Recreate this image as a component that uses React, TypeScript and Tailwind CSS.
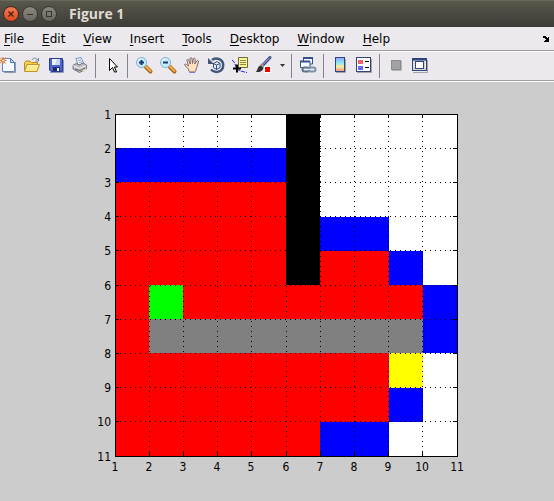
import React from 'react';

const menus = ['File', 'Edit', 'View', 'Insert', 'Tools', 'Desktop', 'Window', 'Help'];

// one string per row, one letter per cell
const map = [
  'wwwwwkwwww',
  'bbbbbkwwww',
  'rrrrrkwwww',
  'rrrrrkbbww',
  'rrrrrkrrbw',
  'rgrrrrrrrb',
  'raaaaaaaab',
  'rrrrrrrryw',
  'rrrrrrrrbw',
  'rrrrrrbbww',
];

const colors: Record<string, string> = {
  w: '#ffffff',
  k: '#000000',
  b: '#0000ff',
  r: '#ff0000',
  g: '#00ff00',
  a: '#808080',
  y: '#ffff00',
};

const SIZE = 342;
const LEFT = 24;
const TOP = 8;
const edge = (i: number) => Math.round((i * SIZE) / 10);
const line = (i: number) => Math.floor((i * SIZE) / 10);
const ticks = [0, 1, 2, 3, 4, 5, 6, 7, 8, 9, 10];

const Plot = () => (
  <svg width="392" height="372" viewBox="0 0 392 372" role="img" aria-label="Grid map" shapeRendering="crispEdges">
    <g transform={`translate(${LEFT} ${TOP})`}>
      {map.map((row, y) =>
        row.split('').map((c, x) => (
          <rect key={`${x}-${y}`} x={edge(x)} y={edge(y)} width={edge(x + 1) - edge(x)} height={edge(y + 1) - edge(y)} fill={colors[c]} />
        ))
      )}
      {ticks.slice(1, 10).map((i) => (
        <g key={i} stroke="#000" strokeWidth="1">
          <path d={`M${line(i) + 0.5} 2V${SIZE}`} strokeDasharray="1 4" />
          <path d={`M0 ${line(i) + 0.5}H${SIZE}`} strokeDasharray="1 4" />
          <path d={`M${line(i) + 0.5} 0v4M${line(i) + 0.5} ${SIZE - 5}v5`} />
          <path d={`M0 ${line(i) + 0.5}h4M${SIZE - 4} ${line(i) + 0.5}h4`} />
        </g>
      ))}
      <rect x="0.5" y="0.5" width={SIZE} height={SIZE} fill="none" stroke="#000" />
      <g className="font-['DejaVu_Sans_Condensed','DejaVu_Sans',sans-serif] text-[12px]" fill="#000">
        {ticks.map((i) => (
          <React.Fragment key={i}>
            <text x={line(i)} y={SIZE + 15} textAnchor="middle">{i + 1}</text>
            <text x="-4" y={line(i) + 5} textAnchor="end">{i + 1}</text>
          </React.Fragment>
        ))}
      </g>
    </g>
  </svg>
);

const Icon = ({ children }: { children: React.ReactNode }) => (
  <svg viewBox="0 0 16 16" className="block h-4 w-4 overflow-visible" fill="none" aria-hidden="true">{children}</svg>
);

const NewIcon = () => (
  <Icon>
    <path d="M4 15.5H15.5V5" stroke="#9098b0" />
    <path d="M2.5 1.5H10.5L14.5 5.5V14.5H2.5Z" fill="#f4f9ff" stroke="#6683b5" />
    <path d="M10.5 1.5V5.5H14.5Z" fill="#b8d4f2" stroke="#5478b0" />
    <path d="M3 0V7M-1 3.5H6.5M0 .5L5.5 6.5M5.5.5L0 6.5" stroke="#e8773c" />
    <circle cx="3" cy="3.5" r="1.5" fill="#fff0b0" stroke="#e8773c" />
  </Icon>
);

const OpenIcon = () => (
  <Icon>
    <path d="M8 3C9 .5 12 .5 13.5 3M14.5 1V4H11.5" stroke="#6a7e9e" />
    <path d="M.5 13.5V5.5L2 4H6L7.5 5.5H13.5V13.5Z" fill="#f3cf55" stroke="#b98a22" />
    <path d="M.5 14.5L3 7.5H15.5L13 14.5Z" fill="#ffe98c" stroke="#c39323" />
    <path d="M4 8.5H14" stroke="#fff8c8" />
  </Icon>
);

const SaveIcon = () => (
  <Icon>
    <path d="M2 15.5H15.5V3" stroke="#9098b8" />
    <path d="M1.5 1.5H14.5V14.5H3L1.5 13Z" fill="#4a67d0" stroke="#2b3a92" />
    <path d="M4 2H12V8H4Z" fill="#edf3ff" />
    <path d="M9 2H12V8H7Z" fill="#c7d6f5" />
    <path d="M5 10H12V14H5Z" fill="#202b68" />
    <path d="M9 11H11V14H9Z" fill="#f2f4ff" />
  </Icon>
);

const PrintIcon = () => (
  <Icon>
    <path d="M4 1.5L9 .5L12 7L6 8Z" fill="#eff5ff" stroke="#7792b8" />
    <path d="M6 3.5L9 3M7 5.5L10 5" stroke="#8aaad6" />
    <path d="M1 8.5L4 6.5L7 8L11 6L14.5 8V12L7.5 15.5L1 12Z" fill="#bdbdc3" stroke="#77777f" />
    <path d="M1.5 9L7.5 11.5L14 8.5" stroke="#f5f5f5" />
    <path d="M3 12L8 13.5L13 11" stroke="#626269" />
    <path d="M10 13L15 11.5L12 15Z" fill="#e6d9a6" />
  </Icon>
);

const PointerIcon = () => (
  <Icon>
    <path d="M5.5 1.5V13.5L8.5 10.5L10.5 15H12.5L10.5 10H13.5Z" fill="#fff" stroke="#000" />
  </Icon>
);

const ZoomIcon = ({ plus }: { plus?: boolean }) => (
  <Icon>
    <path d="M10 10L14.5 14.5" stroke="#a06820" strokeWidth="4" strokeLinecap="round" />
    <path d="M10 9.5L14.5 14" stroke="#f5ad45" strokeWidth="2" strokeLinecap="round" />
    <circle cx="5.5" cy="5.5" r="5" fill="#c5edfa" stroke="#80afd0" />
    <path d="M2 4Q3 2 5 2" stroke="#fff" />
    <path d={plus ? 'M3 5.5H8M5.5 3V8' : 'M3 5.5H8'} stroke="#163875" strokeWidth="2" />
  </Icon>
);

const HandIcon = () => (
  <Icon>
    <path
      d="M5 14.5L4.5 12L.8 8.5C0 7.3 1.4 6.5 2.5 7.5L4.5 9L3 3.5C2.7 2 4.3 1.8 4.8 3.2L6.3 7L6 1.8C6 .3 7.8.3 8 1.8L8.5 6.5L9.3 2C9.6.7 11.3 1 11.2 2.5L10.8 7L12.7 4C13.5 2.9 14.9 3.7 14.4 5L12.7 10.5L11.5 14.5Z"
      fill="#ffe2bd" stroke="#7b6870"
    />
    <path d="M5 14.5H11.5V16H5Z" fill="#f9d4a4" />
    <path d="M5.5 15.5H11" stroke="#6681c6" />
  </Icon>
);

const RotateIcon = () => (
  <Icon>
    <path d="M4 3C8 -.5 15.5 2.5 15.2 8.5C15 15 7 17 3 12.5" stroke="#405878" strokeWidth="2.5" />
    <path d="M0 1V7H6Z" fill="#405878" />
    <path d="M5.5 6.5L9 4.5L12 6.5V10.5L8.5 12.5L5.5 10.5Z" fill="#e0f0ff" stroke="#344b7d" />
    <path d="M5.5 6.5L8.5 8V12.5M8.5 8L12 6.5" stroke="#344b7d" />
  </Icon>
);

const DataCursorIcon = () => (
  <Icon>
    <path d="M0 3C2 4 3 7 4 10C6 14 10 14.5 15 15.5" stroke="#1c24e8" strokeDasharray="4 1" />
    <path d="M6.5.5H15.5V10.5H8L6.5 12Z" fill="#fff59c" stroke="#6b6b38" />
    <path d="M8 3.5H14M8 5.5H14M8 7.5H14" stroke="#8a8a42" />
    <path d="M1 11.5H9M5 7.5V15.5" stroke="#000" strokeWidth="2" />
  </Icon>
);

const BrushIcon = () => (
  <Icon>
    <path d="M7 8L14 .5" stroke="#33427b" strokeWidth="3" strokeLinecap="round" />
    <path d="M7.5 7L14 .5" stroke="#b8c6eb" />
    <path d="M5 7L8 10" stroke="#8d8d93" strokeWidth="3" />
    <path d="M-.5 15C2 14 1 9.5 4.5 8.5L7.5 11C6.5 14.5 3 15.5 -.5 15Z" fill="#33302e" />
    <rect x="8.5" y="9.5" width="6" height="6" fill="#f00000" stroke="#fff" />
  </Icon>
);

const LinkIcon = () => (
  <Icon>
    <path d="M3.5.5H12.5V7H3.5Z" fill="#f7fbff" stroke="#34508b" />
    <path d="M3 1H13" stroke="#34508b" strokeWidth="2" />
    <path d="M.5 4.5H10V10.5H.5Z" fill="#f7fbff" stroke="#34508b" />
    <path d="M0 4.5H10" stroke="#34508b" strokeWidth="2" />
    <rect x="2.5" y="10.5" width="7" height="4" rx="2" stroke="#5c7087" strokeWidth="2" />
    <rect x="8.5" y="10.5" width="7" height="4" rx="2" stroke="#7d92a6" strokeWidth="2" />
    <path d="M6 12.5H12" stroke="#dce8f2" />
  </Icon>
);

const ColorbarIcon = () => (
  <Icon>
    <defs>
      <linearGradient id="bar" x1="0" y1="0" x2="0" y2="1">
        <stop offset="0" stopColor="#9d9dff" />
        <stop offset=".35" stopColor="#86e5f7" />
        <stop offset=".65" stopColor="#f4efa0" />
        <stop offset="1" stopColor="#ff927c" />
      </linearGradient>
    </defs>
    <path d="M4 15.5H13.5V2" stroke="#a2a2aa" />
    <rect x="3.5" y=".5" width="9" height="14" fill="url(#bar)" stroke="#30457d" />
  </Icon>
);

const LegendIcon = () => (
  <Icon>
    <path d="M1 15.5H15.5V2" stroke="#a2a2aa" />
    <rect x=".5" y=".5" width="14" height="14" fill="#fff" stroke="#30457d" />
    <path d="M2 3H7V7H2Z" fill="#ed6262" />
    <path d="M2 9H7V13H2Z" fill="#6868ec" />
    <path d="M9 4.5H13M9 10.5H13" stroke="#000" />
  </Icon>
);

const HideToolsIcon = () => (
  <Icon>
    <path d="M4 13.5H13.5V4" stroke="#b7b5bb" />
    <rect x="3.5" y="3.5" width="9" height="9" fill="#a2a2a2" stroke="#8b8b8b" />
  </Icon>
);

const ShowToolsIcon = () => (
  <Icon>
    <path d="M1 15.5H15.5V3" stroke="#a2a2aa" />
    <rect x=".5" y="1.5" width="14" height="12" fill="#d8d6cb" stroke="#30457d" />
    <path d="M0 2.5H15" stroke="#30457d" strokeWidth="2" />
    <rect x="3.5" y="4.5" width="8" height="7" fill="#fff" stroke="#30457d" />
    <path d="M2 5V11M13.5 5V11" stroke="#fff" strokeDasharray="1 1" />
  </Icon>
);

const Tool = ({ label, children }: { label: string; children: React.ReactNode }) => (
  <button type="button" aria-label={label} className="h-4 w-4 shrink-0">{children}</button>
);

const Separator = () => <div className="-mt-[3px] -ml-px h-6 w-px shrink-0 bg-[#85838a]" />;

const TitleBar = () => (
  <header className="flex h-[27px] items-center gap-3 border-t border-[#69665a] bg-linear-to-b from-[#5a574b] to-[#3d3b37] pl-[3px]">
    <div className="flex gap-[3px]">
      <button type="button" aria-label="Close" className="h-4 w-4 rounded-full border border-[#3a2a22] bg-linear-to-b from-[#f37b52] to-[#dc4a1e]">
        <svg viewBox="0 0 14 14" className="block" stroke="#4b2013" strokeWidth="1.3"><path d="M4.5 4.5L9.5 9.5M9.5 4.5L4.5 9.5" /></svg>
      </button>
      <button type="button" aria-label="Minimize" className="h-4 w-4 rounded-full border border-[#393732] bg-linear-to-b from-[#8b887e] to-[#69675f]">
        <svg viewBox="0 0 14 14" className="block" stroke="#35342f"><path d="M4 7.5H10" /></svg>
      </button>
      <button type="button" aria-label="Maximize" className="h-4 w-4 rounded-full border border-[#393732] bg-linear-to-b from-[#8b887e] to-[#69675f]">
        <svg viewBox="0 0 14 14" className="block" stroke="#35342f" fill="none"><rect x="4.5" y="4.5" width="5" height="5" /></svg>
      </button>
    </div>
    <h1 className="font-['Open_Sans',sans-serif] text-[14px] leading-4 font-bold text-[#dfdbd2]">Figure 1</h1>
  </header>
);

const MenuBar = () => (
  <nav className="flex h-[25px] items-center justify-between border-b border-white pr-1 pl-1 shadow-[inset_0_-1px_#a09ea5]">
    <div className="flex gap-[18px]">
      {menus.map((m) => (
        <button key={m} type="button" className="text-[12px] leading-4">
          <span className="underline underline-offset-2">{m[0]}</span>{m.slice(1)}
        </button>
      ))}
    </div>
    <button type="button" aria-label="Dock figure" className="h-2 w-2">
      <svg viewBox="0 0 8 8" className="block" shapeRendering="crispEdges">
        <path d="M0 2H1V1H4V2H5V3H6V2H7V7H2V6H3V5H4V4H3V3H1V2Z" />
      </svg>
    </button>
  </nav>
);

const Toolbar = () => (
  <div role="toolbar" className="flex h-[30px] items-start gap-2 border-b border-white pt-[5px] shadow-[inset_0_-1px_#a09ea5]">
    <Tool label="New Figure"><NewIcon /></Tool>
    <Tool label="Open File"><OpenIcon /></Tool>
    <Tool label="Save Figure"><SaveIcon /></Tool>
    <Tool label="Print Figure"><PrintIcon /></Tool>
    <Separator />
    <Tool label="Edit Plot"><PointerIcon /></Tool>
    <Separator />
    <Tool label="Zoom In"><ZoomIcon plus /></Tool>
    <Tool label="Zoom Out"><ZoomIcon /></Tool>
    <Tool label="Pan"><HandIcon /></Tool>
    <Tool label="Rotate 3D"><RotateIcon /></Tool>
    <Tool label="Data Cursor"><DataCursorIcon /></Tool>
    <Tool label="Brush"><BrushIcon /></Tool>
    <button type="button" aria-label="Brush colors" className="flex h-4 w-1 shrink-0 items-center justify-center">
      <svg viewBox="0 0 5 3" className="h-[3px] w-[5px] shrink-0"><path d="M0 0H5L2.5 3Z" fill="#333" /></svg>
    </button>
    <Separator />
    <Tool label="Link Plot"><LinkIcon /></Tool>
    <Separator />
    <Tool label="Insert Colorbar"><ColorbarIcon /></Tool>
    <Tool label="Insert Legend"><LegendIcon /></Tool>
    <Separator />
    <Tool label="Hide Plot Tools"><HideToolsIcon /></Tool>
    <Tool label="Show Plot Tools"><ShowToolsIcon /></Tool>
  </div>
);

export default function App() {
  return (
    <div className="flex min-h-screen flex-col bg-[#ebe9ed] font-['DejaVu_Sans',sans-serif] text-black">
      <TitleBar />
      <MenuBar />
      <Toolbar />
      <main className="flex flex-1 items-center justify-center bg-[#cccccc] pl-5">
        <Plot />
      </main>
    </div>
  );
}
